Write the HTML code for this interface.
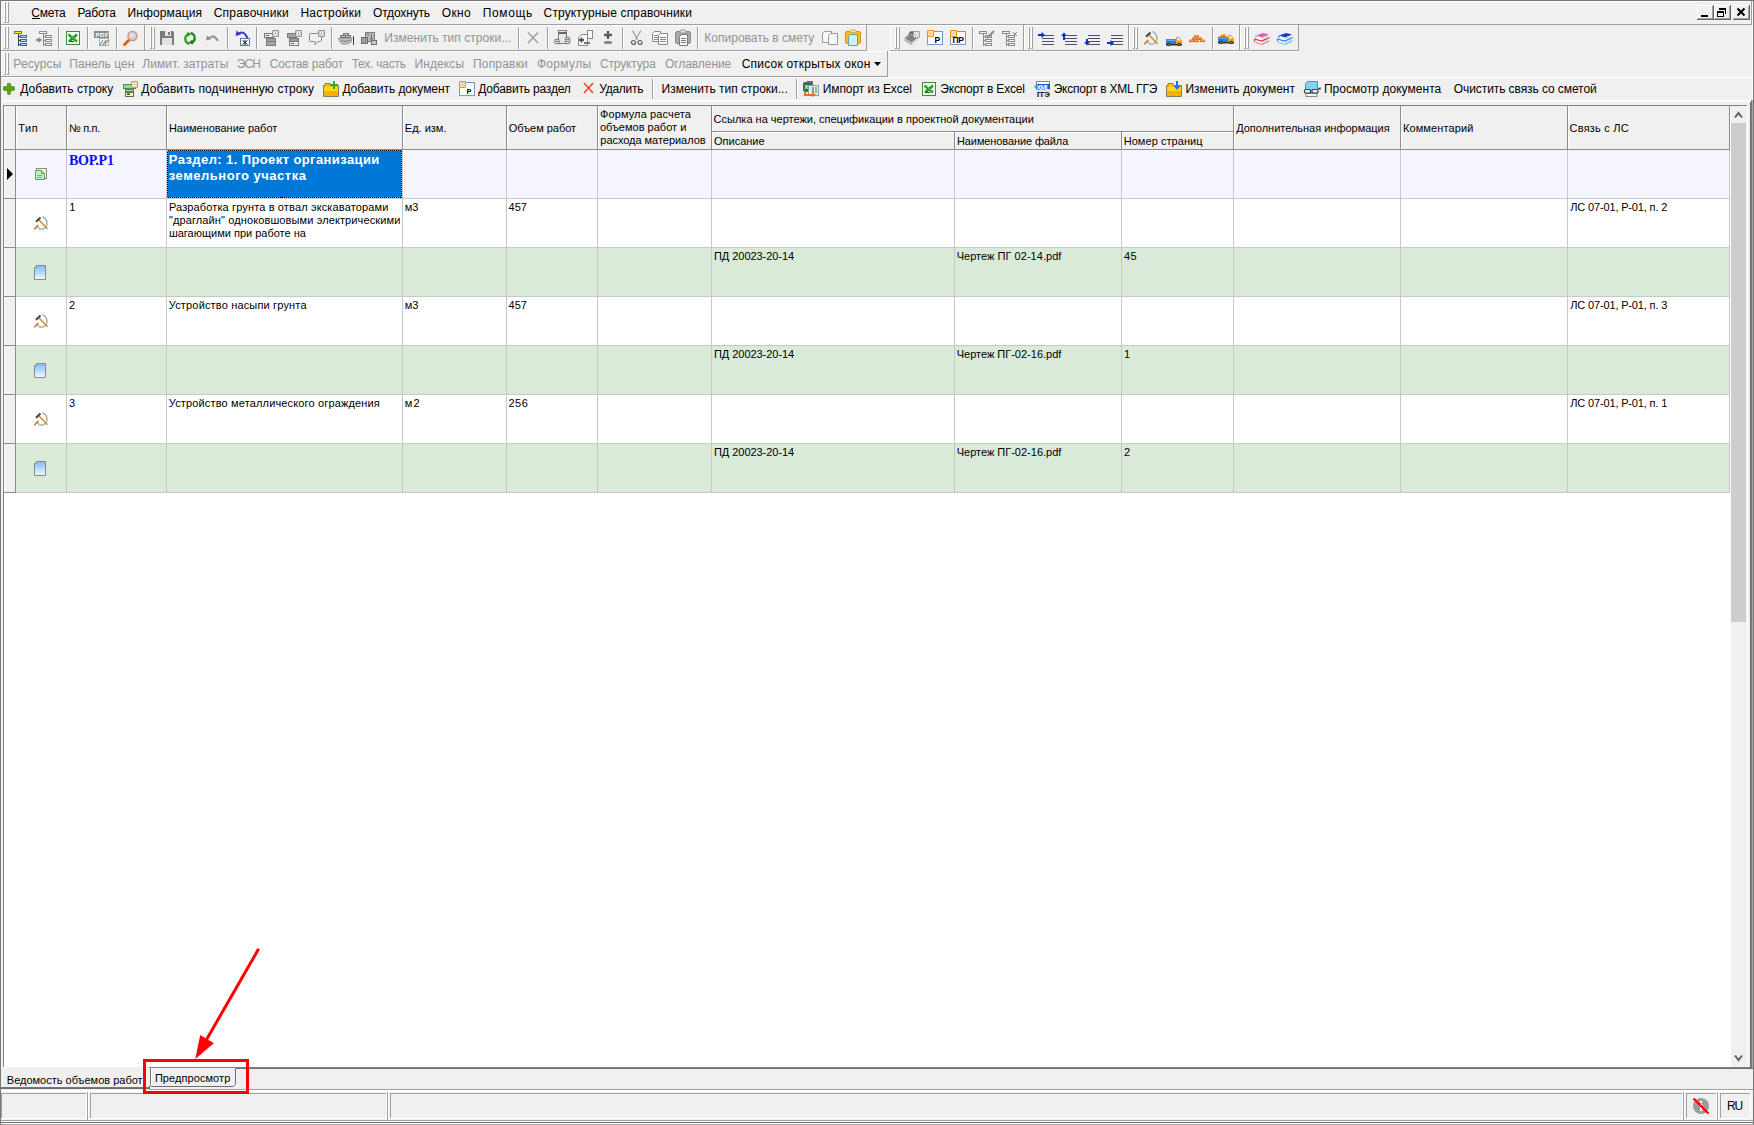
<!DOCTYPE html>
<html><head><meta charset="utf-8"><style>
html,body{margin:0;padding:0}
body{width:1754px;height:1125px;overflow:hidden;position:relative;background:#f0f0f0;font-family:"Liberation Sans",sans-serif}
body>div,body>span,body>svg{position:absolute;display:block}
body>span{white-space:pre}
</style></head><body>
<div style="left:0px;top:0px;width:1754px;height:1px;background:#787878;"></div>
<div style="left:0px;top:0px;width:1px;height:1125px;background:#787878;"></div>
<div style="left:1753px;top:0px;width:1px;height:1125px;background:#787878;"></div>
<div style="left:1px;top:1px;width:1752px;height:1px;background:#ffffff;"></div>
<div style="left:1px;top:24px;width:1752px;height:1px;background:#a0a0a0;"></div>
<div style="left:1px;top:1px;width:1px;height:23px;background:#ffffff;"></div>
<div style="left:4px;top:2px;width:1px;height:20px;background:#ffffff;"></div>
<div style="left:5px;top:2px;width:1px;height:21px;background:#a0a0a0;"></div>
<div style="left:4px;top:22px;width:1px;height:1px;background:#a0a0a0;"></div>
<div style="left:7px;top:2px;width:1px;height:20px;background:#ffffff;"></div>
<div style="left:8px;top:2px;width:1px;height:21px;background:#a0a0a0;"></div>
<div style="left:7px;top:22px;width:1px;height:1px;background:#a0a0a0;"></div>
<div style="left:32px;top:18px;width:8px;height:1px;background:#000;"></div>
<div style="left:1751px;top:1px;width:1px;height:24px;background:#a0a0a0;"></div>
<div style="left:1697px;top:5px;width:17px;height:15px;background:#f0f0f0;"></div>
<div style="left:1697px;top:5px;width:17px;height:1px;background:#ffffff;"></div>
<div style="left:1697px;top:5px;width:1px;height:15px;background:#ffffff;"></div>
<div style="left:1697px;top:19px;width:17px;height:1px;background:#696969;"></div>
<div style="left:1713px;top:5px;width:1px;height:15px;background:#696969;"></div>
<div style="left:1698px;top:18px;width:15px;height:1px;background:#a0a0a0;"></div>
<div style="left:1712px;top:6px;width:1px;height:13px;background:#a0a0a0;"></div>
<svg style="left:1697px;top:5px" width="17" height="15" viewBox="0 0 17 15"><rect x="4" y="10" width="7" height="2" fill="#000"/></svg>
<div style="left:1714px;top:5px;width:17px;height:15px;background:#f0f0f0;"></div>
<div style="left:1714px;top:5px;width:17px;height:1px;background:#ffffff;"></div>
<div style="left:1714px;top:5px;width:1px;height:15px;background:#ffffff;"></div>
<div style="left:1714px;top:19px;width:17px;height:1px;background:#696969;"></div>
<div style="left:1730px;top:5px;width:1px;height:15px;background:#696969;"></div>
<div style="left:1715px;top:18px;width:15px;height:1px;background:#a0a0a0;"></div>
<div style="left:1729px;top:6px;width:1px;height:13px;background:#a0a0a0;"></div>
<svg style="left:1714px;top:5px" width="17" height="15" viewBox="0 0 17 15"><g shape-rendering="crispEdges"><rect x="5" y="3" width="7" height="2" fill="#000"/><rect x="11" y="3" width="1" height="6" fill="#000"/><rect x="3" y="6" width="7" height="2" fill="#000"/><rect x="3" y="6" width="1" height="6" fill="#000"/><rect x="9" y="6" width="1" height="6" fill="#000"/><rect x="3" y="11" width="7" height="1" fill="#000"/></g></svg>
<div style="left:1733px;top:5px;width:17px;height:15px;background:#f0f0f0;"></div>
<div style="left:1733px;top:5px;width:17px;height:1px;background:#ffffff;"></div>
<div style="left:1733px;top:5px;width:1px;height:15px;background:#ffffff;"></div>
<div style="left:1733px;top:19px;width:17px;height:1px;background:#696969;"></div>
<div style="left:1749px;top:5px;width:1px;height:15px;background:#696969;"></div>
<div style="left:1734px;top:18px;width:15px;height:1px;background:#a0a0a0;"></div>
<div style="left:1748px;top:6px;width:1px;height:13px;background:#a0a0a0;"></div>
<svg style="left:1733px;top:5px" width="17" height="15" viewBox="0 0 17 15"><path d="M4.5 3.5L11.5 10.5M11.5 3.5L4.5 10.5" stroke="#000" stroke-width="2" fill="none"/></svg>
<div style="left:1px;top:25px;width:1752px;height:26px;background:#f0f0f0;"></div>
<div style="left:1px;top:25px;width:144px;height:1px;background:#ffffff;"></div>
<div style="left:1px;top:25px;width:1px;height:25px;background:#ffffff;"></div>
<div style="left:1px;top:50px;width:144px;height:1px;background:#a0a0a0;"></div>
<div style="left:144px;top:25px;width:1px;height:26px;background:#a0a0a0;"></div>
<div style="left:145px;top:25px;width:722px;height:1px;background:#ffffff;"></div>
<div style="left:145px;top:25px;width:1px;height:25px;background:#ffffff;"></div>
<div style="left:145px;top:50px;width:722px;height:1px;background:#a0a0a0;"></div>
<div style="left:866px;top:25px;width:1px;height:26px;background:#a0a0a0;"></div>
<div style="left:890px;top:25px;width:134px;height:1px;background:#ffffff;"></div>
<div style="left:890px;top:25px;width:1px;height:25px;background:#ffffff;"></div>
<div style="left:890px;top:50px;width:134px;height:1px;background:#a0a0a0;"></div>
<div style="left:1023px;top:25px;width:1px;height:26px;background:#a0a0a0;"></div>
<div style="left:1024px;top:25px;width:105px;height:1px;background:#ffffff;"></div>
<div style="left:1024px;top:25px;width:1px;height:25px;background:#ffffff;"></div>
<div style="left:1024px;top:50px;width:105px;height:1px;background:#a0a0a0;"></div>
<div style="left:1128px;top:25px;width:1px;height:26px;background:#a0a0a0;"></div>
<div style="left:1129px;top:25px;width:111px;height:1px;background:#ffffff;"></div>
<div style="left:1129px;top:25px;width:1px;height:25px;background:#ffffff;"></div>
<div style="left:1129px;top:50px;width:111px;height:1px;background:#a0a0a0;"></div>
<div style="left:1239px;top:25px;width:1px;height:26px;background:#a0a0a0;"></div>
<div style="left:1240px;top:25px;width:59px;height:1px;background:#ffffff;"></div>
<div style="left:1240px;top:25px;width:1px;height:25px;background:#ffffff;"></div>
<div style="left:1240px;top:50px;width:59px;height:1px;background:#a0a0a0;"></div>
<div style="left:1298px;top:25px;width:1px;height:26px;background:#a0a0a0;"></div>
<div style="left:867px;top:25px;width:23px;height:1px;background:#ffffff;"></div>
<div style="left:4px;top:27px;width:1px;height:21px;background:#ffffff;"></div>
<div style="left:5px;top:27px;width:1px;height:22px;background:#a0a0a0;"></div>
<div style="left:4px;top:48px;width:1px;height:1px;background:#a0a0a0;"></div>
<div style="left:7px;top:27px;width:1px;height:21px;background:#ffffff;"></div>
<div style="left:8px;top:27px;width:1px;height:22px;background:#a0a0a0;"></div>
<div style="left:7px;top:48px;width:1px;height:1px;background:#a0a0a0;"></div>
<div style="left:150px;top:27px;width:1px;height:21px;background:#ffffff;"></div>
<div style="left:151px;top:27px;width:1px;height:22px;background:#a0a0a0;"></div>
<div style="left:150px;top:48px;width:1px;height:1px;background:#a0a0a0;"></div>
<div style="left:153px;top:27px;width:1px;height:21px;background:#ffffff;"></div>
<div style="left:154px;top:27px;width:1px;height:22px;background:#a0a0a0;"></div>
<div style="left:153px;top:48px;width:1px;height:1px;background:#a0a0a0;"></div>
<div style="left:895px;top:27px;width:1px;height:21px;background:#ffffff;"></div>
<div style="left:896px;top:27px;width:1px;height:22px;background:#a0a0a0;"></div>
<div style="left:895px;top:48px;width:1px;height:1px;background:#a0a0a0;"></div>
<div style="left:898px;top:27px;width:1px;height:21px;background:#ffffff;"></div>
<div style="left:899px;top:27px;width:1px;height:22px;background:#a0a0a0;"></div>
<div style="left:898px;top:48px;width:1px;height:1px;background:#a0a0a0;"></div>
<div style="left:1028px;top:27px;width:1px;height:21px;background:#ffffff;"></div>
<div style="left:1029px;top:27px;width:1px;height:22px;background:#a0a0a0;"></div>
<div style="left:1028px;top:48px;width:1px;height:1px;background:#a0a0a0;"></div>
<div style="left:1031px;top:27px;width:1px;height:21px;background:#ffffff;"></div>
<div style="left:1032px;top:27px;width:1px;height:22px;background:#a0a0a0;"></div>
<div style="left:1031px;top:48px;width:1px;height:1px;background:#a0a0a0;"></div>
<div style="left:1133px;top:27px;width:1px;height:21px;background:#ffffff;"></div>
<div style="left:1134px;top:27px;width:1px;height:22px;background:#a0a0a0;"></div>
<div style="left:1133px;top:48px;width:1px;height:1px;background:#a0a0a0;"></div>
<div style="left:1136px;top:27px;width:1px;height:21px;background:#ffffff;"></div>
<div style="left:1137px;top:27px;width:1px;height:22px;background:#a0a0a0;"></div>
<div style="left:1136px;top:48px;width:1px;height:1px;background:#a0a0a0;"></div>
<div style="left:1244px;top:27px;width:1px;height:21px;background:#ffffff;"></div>
<div style="left:1245px;top:27px;width:1px;height:22px;background:#a0a0a0;"></div>
<div style="left:1244px;top:48px;width:1px;height:1px;background:#a0a0a0;"></div>
<div style="left:1247px;top:27px;width:1px;height:21px;background:#ffffff;"></div>
<div style="left:1248px;top:27px;width:1px;height:22px;background:#a0a0a0;"></div>
<div style="left:1247px;top:48px;width:1px;height:1px;background:#a0a0a0;"></div>
<div style="left:58px;top:27px;width:1px;height:22px;background:#a0a0a0;"></div>
<div style="left:59px;top:27px;width:1px;height:22px;background:#ffffff;"></div>
<div style="left:87px;top:27px;width:1px;height:22px;background:#a0a0a0;"></div>
<div style="left:88px;top:27px;width:1px;height:22px;background:#ffffff;"></div>
<div style="left:116px;top:27px;width:1px;height:22px;background:#a0a0a0;"></div>
<div style="left:117px;top:27px;width:1px;height:22px;background:#ffffff;"></div>
<div style="left:227px;top:27px;width:1px;height:22px;background:#a0a0a0;"></div>
<div style="left:228px;top:27px;width:1px;height:22px;background:#ffffff;"></div>
<div style="left:256px;top:27px;width:1px;height:22px;background:#a0a0a0;"></div>
<div style="left:257px;top:27px;width:1px;height:22px;background:#ffffff;"></div>
<div style="left:331px;top:27px;width:1px;height:22px;background:#a0a0a0;"></div>
<div style="left:332px;top:27px;width:1px;height:22px;background:#ffffff;"></div>
<div style="left:518px;top:27px;width:1px;height:22px;background:#a0a0a0;"></div>
<div style="left:519px;top:27px;width:1px;height:22px;background:#ffffff;"></div>
<div style="left:547px;top:27px;width:1px;height:22px;background:#a0a0a0;"></div>
<div style="left:548px;top:27px;width:1px;height:22px;background:#ffffff;"></div>
<div style="left:622px;top:27px;width:1px;height:22px;background:#a0a0a0;"></div>
<div style="left:623px;top:27px;width:1px;height:22px;background:#ffffff;"></div>
<div style="left:697px;top:27px;width:1px;height:22px;background:#a0a0a0;"></div>
<div style="left:698px;top:27px;width:1px;height:22px;background:#ffffff;"></div>
<div style="left:972px;top:27px;width:1px;height:22px;background:#a0a0a0;"></div>
<div style="left:973px;top:27px;width:1px;height:22px;background:#ffffff;"></div>
<div style="left:1212px;top:27px;width:1px;height:22px;background:#a0a0a0;"></div>
<div style="left:1213px;top:27px;width:1px;height:22px;background:#ffffff;"></div>
<div style="left:1px;top:51px;width:1298px;height:1px;background:#ffffff;"></div>
<div style="left:1px;top:51px;width:887px;height:1px;background:#ffffff;"></div>
<div style="left:1px;top:51px;width:1px;height:25px;background:#ffffff;"></div>
<div style="left:1px;top:76px;width:887px;height:1px;background:#a0a0a0;"></div>
<div style="left:887px;top:51px;width:1px;height:26px;background:#a0a0a0;"></div>
<div style="left:4px;top:53px;width:1px;height:21px;background:#ffffff;"></div>
<div style="left:5px;top:53px;width:1px;height:22px;background:#a0a0a0;"></div>
<div style="left:4px;top:74px;width:1px;height:1px;background:#a0a0a0;"></div>
<div style="left:7px;top:53px;width:1px;height:21px;background:#ffffff;"></div>
<div style="left:8px;top:53px;width:1px;height:22px;background:#a0a0a0;"></div>
<div style="left:7px;top:74px;width:1px;height:1px;background:#a0a0a0;"></div>
<svg style="left:874px;top:62px" width="7" height="4" viewBox="0 0 7 4"><path d="M0 0h7L3.5 4z" fill="#000"/></svg>
<div style="left:1px;top:77px;width:1752px;height:1px;background:#ffffff;"></div>
<div style="left:652px;top:79px;width:1px;height:20px;background:#a0a0a0;"></div>
<div style="left:653px;top:79px;width:1px;height:20px;background:#ffffff;"></div>
<div style="left:796px;top:79px;width:1px;height:20px;background:#a0a0a0;"></div>
<div style="left:797px;top:79px;width:1px;height:20px;background:#ffffff;"></div>
<div style="left:1px;top:100px;width:1752px;height:1px;background:#ffffff;"></div>
<div style="left:1px;top:101px;width:1752px;height:1px;background:#f7f7f7;"></div>
<div style="left:3px;top:105px;width:1745px;height:962px;background:#ffffff;"></div>
<div style="left:3px;top:105px;width:1px;height:962px;background:#828282;"></div>
<div style="left:3px;top:105px;width:1727px;height:1px;background:#828282;"></div>
<div style="left:4px;top:106px;width:1725px;height:43px;background:#f0f0f0;"></div>
<div style="left:4px;top:106px;width:1px;height:43px;background:#ffffff;"></div>
<div style="left:16px;top:106px;width:1px;height:43px;background:#ffffff;"></div>
<div style="left:67px;top:106px;width:1px;height:43px;background:#ffffff;"></div>
<div style="left:167px;top:106px;width:1px;height:43px;background:#ffffff;"></div>
<div style="left:403px;top:106px;width:1px;height:43px;background:#ffffff;"></div>
<div style="left:507px;top:106px;width:1px;height:43px;background:#ffffff;"></div>
<div style="left:598px;top:106px;width:1px;height:43px;background:#ffffff;"></div>
<div style="left:712px;top:106px;width:1px;height:43px;background:#ffffff;"></div>
<div style="left:955px;top:133px;width:1px;height:16px;background:#ffffff;"></div>
<div style="left:1122px;top:133px;width:1px;height:16px;background:#ffffff;"></div>
<div style="left:1234px;top:106px;width:1px;height:43px;background:#ffffff;"></div>
<div style="left:1401px;top:106px;width:1px;height:43px;background:#ffffff;"></div>
<div style="left:1568px;top:106px;width:1px;height:43px;background:#ffffff;"></div>
<div style="left:4px;top:149px;width:1726px;height:1px;background:#8c8c8c;"></div>
<div style="left:712px;top:131px;width:521px;height:1px;background:#8c8c8c;"></div>
<div style="left:712px;top:132px;width:521px;height:1px;background:#ffffff;"></div>
<div style="left:15px;top:106px;width:1px;height:43px;background:#8c8c8c;"></div>
<div style="left:66px;top:106px;width:1px;height:43px;background:#8c8c8c;"></div>
<div style="left:166px;top:106px;width:1px;height:43px;background:#8c8c8c;"></div>
<div style="left:402px;top:106px;width:1px;height:43px;background:#8c8c8c;"></div>
<div style="left:506px;top:106px;width:1px;height:43px;background:#8c8c8c;"></div>
<div style="left:597px;top:106px;width:1px;height:43px;background:#8c8c8c;"></div>
<div style="left:711px;top:106px;width:1px;height:43px;background:#8c8c8c;"></div>
<div style="left:954px;top:132px;width:1px;height:17px;background:#8c8c8c;"></div>
<div style="left:1121px;top:132px;width:1px;height:17px;background:#8c8c8c;"></div>
<div style="left:1233px;top:106px;width:1px;height:43px;background:#8c8c8c;"></div>
<div style="left:1400px;top:106px;width:1px;height:43px;background:#8c8c8c;"></div>
<div style="left:1567px;top:106px;width:1px;height:43px;background:#8c8c8c;"></div>
<div style="left:1729px;top:106px;width:1px;height:43px;background:#8c8c8c;"></div>
<div style="left:16px;top:150px;width:1713px;height:48px;background:#f5f5fd;"></div>
<div style="left:4px;top:150px;width:11px;height:48px;background:#f0f0f0;"></div>
<div style="left:4px;top:150px;width:1px;height:48px;background:#ffffff;"></div>
<div style="left:4px;top:198px;width:12px;height:1px;background:#8c8c8c;"></div>
<div style="left:16px;top:198px;width:1714px;height:1px;background:#c8c8c8;"></div>
<div style="left:16px;top:199px;width:1713px;height:48px;background:#ffffff;"></div>
<div style="left:4px;top:199px;width:11px;height:48px;background:#f0f0f0;"></div>
<div style="left:4px;top:199px;width:1px;height:48px;background:#ffffff;"></div>
<div style="left:4px;top:247px;width:12px;height:1px;background:#8c8c8c;"></div>
<div style="left:16px;top:247px;width:1714px;height:1px;background:#c8c8c8;"></div>
<div style="left:16px;top:248px;width:1713px;height:48px;background:#daead9;"></div>
<div style="left:4px;top:248px;width:11px;height:48px;background:#f0f0f0;"></div>
<div style="left:4px;top:248px;width:1px;height:48px;background:#ffffff;"></div>
<div style="left:4px;top:296px;width:12px;height:1px;background:#8c8c8c;"></div>
<div style="left:16px;top:296px;width:1714px;height:1px;background:#c8c8c8;"></div>
<div style="left:16px;top:297px;width:1713px;height:48px;background:#ffffff;"></div>
<div style="left:4px;top:297px;width:11px;height:48px;background:#f0f0f0;"></div>
<div style="left:4px;top:297px;width:1px;height:48px;background:#ffffff;"></div>
<div style="left:4px;top:345px;width:12px;height:1px;background:#8c8c8c;"></div>
<div style="left:16px;top:345px;width:1714px;height:1px;background:#c8c8c8;"></div>
<div style="left:16px;top:346px;width:1713px;height:48px;background:#daead9;"></div>
<div style="left:4px;top:346px;width:11px;height:48px;background:#f0f0f0;"></div>
<div style="left:4px;top:346px;width:1px;height:48px;background:#ffffff;"></div>
<div style="left:4px;top:394px;width:12px;height:1px;background:#8c8c8c;"></div>
<div style="left:16px;top:394px;width:1714px;height:1px;background:#c8c8c8;"></div>
<div style="left:16px;top:395px;width:1713px;height:48px;background:#ffffff;"></div>
<div style="left:4px;top:395px;width:11px;height:48px;background:#f0f0f0;"></div>
<div style="left:4px;top:395px;width:1px;height:48px;background:#ffffff;"></div>
<div style="left:4px;top:443px;width:12px;height:1px;background:#8c8c8c;"></div>
<div style="left:16px;top:443px;width:1714px;height:1px;background:#c8c8c8;"></div>
<div style="left:16px;top:444px;width:1713px;height:48px;background:#daead9;"></div>
<div style="left:4px;top:444px;width:11px;height:48px;background:#f0f0f0;"></div>
<div style="left:4px;top:444px;width:1px;height:48px;background:#ffffff;"></div>
<div style="left:4px;top:492px;width:12px;height:1px;background:#8c8c8c;"></div>
<div style="left:16px;top:492px;width:1714px;height:1px;background:#c8c8c8;"></div>
<div style="left:15px;top:150px;width:1px;height:343px;background:#8c8c8c;"></div>
<div style="left:66px;top:150px;width:1px;height:343px;background:#c8c8c8;"></div>
<div style="left:166px;top:150px;width:1px;height:343px;background:#c8c8c8;"></div>
<div style="left:402px;top:150px;width:1px;height:343px;background:#c8c8c8;"></div>
<div style="left:506px;top:150px;width:1px;height:343px;background:#c8c8c8;"></div>
<div style="left:597px;top:150px;width:1px;height:343px;background:#c8c8c8;"></div>
<div style="left:711px;top:150px;width:1px;height:343px;background:#c8c8c8;"></div>
<div style="left:954px;top:150px;width:1px;height:343px;background:#c8c8c8;"></div>
<div style="left:1121px;top:150px;width:1px;height:343px;background:#c8c8c8;"></div>
<div style="left:1233px;top:150px;width:1px;height:343px;background:#c8c8c8;"></div>
<div style="left:1400px;top:150px;width:1px;height:343px;background:#c8c8c8;"></div>
<div style="left:1567px;top:150px;width:1px;height:343px;background:#c8c8c8;"></div>
<div style="left:1729px;top:150px;width:1px;height:343px;background:#c8c8c8;"></div>
<div style="left:167px;top:150px;width:235px;height:48px;background:#0078d7;"></div>
<svg style="left:167px;top:150px" width="235" height="48" viewBox="0 0 235 48" shape-rendering="crispEdges"><rect x="0.5" y="0.5" width="234" height="47" fill="none" stroke="#f08a20"/><rect x="0.5" y="0.5" width="234" height="47" fill="none" stroke="#000" stroke-dasharray="1 1"/></svg>
<svg style="left:7px;top:168px" width="7" height="12" viewBox="0 0 7 12"><path d="M0 0L6 6L0 12z" fill="#000"/></svg>
<div style="left:1731px;top:106px;width:16px;height:961px;background:#f0f0f0;"></div>
<div style="left:1747px;top:105px;width:1px;height:962px;background:#ffffff;"></div>
<div style="left:1731px;top:123px;width:15px;height:499px;background:#cdcdcd;"></div>
<svg style="left:1733px;top:110px" width="11" height="10" viewBox="0 0 11 10"><path d="M2 7.5L5.5 3L9 7.5" stroke="#606060" stroke-width="2" fill="none"/></svg>
<svg style="left:1733px;top:1053px" width="11" height="10" viewBox="0 0 11 10"><path d="M2 2.5L5.5 7L9 2.5" stroke="#606060" stroke-width="2" fill="none"/></svg>
<div style="left:1748px;top:102px;width:1px;height:966px;background:#f0f0f0;"></div>
<div style="left:1749px;top:102px;width:1px;height:966px;background:#f0f0f0;"></div>
<div style="left:1750px;top:102px;width:1px;height:966px;background:#6e6e6e;"></div>
<div style="left:1751px;top:100px;width:1px;height:1025px;background:#7a7a7a;"></div>
<div style="left:1752px;top:1px;width:1px;height:99px;background:#ffffff;"></div>
<div style="left:1752px;top:100px;width:1px;height:1025px;background:#a8a8a8;"></div>
<div style="left:1730px;top:105px;width:17px;height:1px;background:#828282;"></div>
<div style="left:149px;top:1067px;width:1602px;height:1px;background:#828282;"></div>
<div style="left:1px;top:1068px;width:1752px;height:21px;background:#f0f0f0;"></div>
<div style="left:236px;top:1068px;width:1517px;height:1px;background:#6e6e6e;"></div>
<div style="left:1px;top:1087px;width:149px;height:1px;background:#777777;"></div>
<div style="left:1px;top:1088px;width:149px;height:1px;background:#6a6a6a;"></div>
<div style="left:149px;top:1089px;width:1604px;height:1px;background:#a0a0a0;"></div>
<svg style="left:148px;top:1068px" width="90" height="21" viewBox="0 0 90 21"><path d="M2.5 0.5V16.5L0.5 19.5" stroke="#6e6e6e" fill="none"/><path d="M2.5 18.5H85.5L87.5 16.5V0.5" stroke="#6e6e6e" fill="none"/><path d="M3.5 1V17" stroke="#fff"/></svg>
<div style="left:1px;top:1090px;width:1752px;height:35px;background:#f0f0f0;"></div>
<div style="left:1px;top:1090px;width:1752px;height:1px;background:#ffffff;"></div>
<div style="left:1px;top:1091px;width:1752px;height:1px;background:#ffffff;"></div>
<div style="left:1px;top:1093px;width:85px;height:1px;background:#a0a0a0;"></div>
<div style="left:1px;top:1093px;width:1px;height:25px;background:#a0a0a0;"></div>
<div style="left:1px;top:1118px;width:86px;height:1px;background:#ffffff;"></div>
<div style="left:86px;top:1093px;width:1px;height:26px;background:#ffffff;"></div>
<div style="left:87px;top:1092px;width:1px;height:28px;background:#a0a0a0;"></div>
<div style="left:88px;top:1092px;width:1px;height:28px;background:#ffffff;"></div>
<div style="left:86px;top:1092px;width:1px;height:28px;background:#ffffff;"></div>
<div style="left:90px;top:1093px;width:296px;height:1px;background:#a0a0a0;"></div>
<div style="left:90px;top:1093px;width:1px;height:25px;background:#a0a0a0;"></div>
<div style="left:90px;top:1118px;width:297px;height:1px;background:#ffffff;"></div>
<div style="left:386px;top:1093px;width:1px;height:26px;background:#ffffff;"></div>
<div style="left:387px;top:1092px;width:1px;height:28px;background:#a0a0a0;"></div>
<div style="left:388px;top:1092px;width:1px;height:28px;background:#ffffff;"></div>
<div style="left:386px;top:1092px;width:1px;height:28px;background:#ffffff;"></div>
<div style="left:390px;top:1093px;width:1292px;height:1px;background:#a0a0a0;"></div>
<div style="left:390px;top:1093px;width:1px;height:25px;background:#a0a0a0;"></div>
<div style="left:390px;top:1118px;width:1293px;height:1px;background:#ffffff;"></div>
<div style="left:1682px;top:1093px;width:1px;height:26px;background:#ffffff;"></div>
<div style="left:1683px;top:1092px;width:1px;height:28px;background:#a0a0a0;"></div>
<div style="left:1684px;top:1092px;width:1px;height:28px;background:#ffffff;"></div>
<div style="left:1682px;top:1092px;width:1px;height:28px;background:#ffffff;"></div>
<div style="left:1686px;top:1093px;width:30px;height:1px;background:#a0a0a0;"></div>
<div style="left:1686px;top:1093px;width:1px;height:25px;background:#a0a0a0;"></div>
<div style="left:1686px;top:1118px;width:31px;height:1px;background:#ffffff;"></div>
<div style="left:1716px;top:1093px;width:1px;height:26px;background:#ffffff;"></div>
<div style="left:1717px;top:1092px;width:1px;height:28px;background:#a0a0a0;"></div>
<div style="left:1718px;top:1092px;width:1px;height:28px;background:#ffffff;"></div>
<div style="left:1716px;top:1092px;width:1px;height:28px;background:#ffffff;"></div>
<div style="left:1720px;top:1093px;width:30px;height:1px;background:#a0a0a0;"></div>
<div style="left:1720px;top:1093px;width:1px;height:25px;background:#a0a0a0;"></div>
<div style="left:1720px;top:1118px;width:31px;height:1px;background:#ffffff;"></div>
<div style="left:1750px;top:1093px;width:1px;height:26px;background:#ffffff;"></div>
<div style="left:1px;top:1120px;width:1752px;height:1px;background:#a0a0a0;"></div>
<div style="left:1px;top:1121px;width:1752px;height:1px;background:#ffffff;"></div>
<div style="left:1px;top:1122px;width:1752px;height:1px;background:#6e6e6e;"></div>
<div style="left:1px;top:1123px;width:1752px;height:1px;background:#ffffff;"></div>
<div style="left:0px;top:1124px;width:1754px;height:1px;background:#a0a0a0;"></div>
<svg style="left:1692px;top:1097px" width="18" height="18" viewBox="0 0 18 18"><circle cx="9" cy="9" r="8" fill="#9c9c9c"/><rect x="8" y="4" width="2.2" height="2" fill="#fff"/><rect x="8" y="7" width="2.2" height="7" fill="#fff"/><path d="M1.5 1.5L16.5 16.5" stroke="#ff0000" stroke-width="2.2"/></svg>
<svg style="left:0;top:0" width="1754" height="1125" viewBox="0 0 1754 1125"><g transform="translate(13 30)"><rect x="1" y="1" width="8" height="3" fill="#7a7a30"/><rect x="2" y="2" width="6" height="1" fill="#ffff00"/><rect x="5" y="4" width="1" height="12" fill="#2a3a60"/><rect x="5" y="6" width="2" height="1" fill="#2a3a60"/><rect x="5" y="10" width="2" height="1" fill="#2a3a60"/><rect x="5" y="14" width="2" height="1" fill="#2a3a60"/><rect x="7" y="5" width="7" height="3" fill="#4a5f8a"/><rect x="8" y="6" width="5" height="1" fill="#b4dcff"/><rect x="7" y="9" width="7" height="3" fill="#4a5f8a"/><rect x="8" y="10" width="5" height="1" fill="#b4dcff"/><rect x="7" y="13" width="7" height="3" fill="#4a5f8a"/><rect x="8" y="14" width="5" height="1" fill="#b4dcff"/></g><g transform="translate(36 30)"><rect x="3" y="1" width="8" height="3" fill="#8a8a8a"/><rect x="4" y="2" width="6" height="1" fill="#f4f4f4"/><rect x="7" y="4" width="1" height="12" fill="#8a8a8a"/><rect x="7" y="6" width="2" height="1" fill="#8a8a8a"/><rect x="7" y="10" width="2" height="1" fill="#8a8a8a"/><rect x="7" y="14" width="2" height="1" fill="#8a8a8a"/><rect x="9" y="5" width="7" height="3" fill="#8a8a8a"/><rect x="10" y="6" width="5" height="1" fill="#f4f4f4"/><rect x="9" y="9" width="7" height="3" fill="#8a8a8a"/><rect x="10" y="10" width="5" height="1" fill="#f4f4f4"/><rect x="9" y="13" width="7" height="3" fill="#8a8a8a"/><rect x="10" y="14" width="5" height="1" fill="#f4f4f4"/><rect x="0" y="9" width="3" height="2" fill="#858585"/><path d="M2.5 7L6 10L2.5 13z" fill="#858585"/></g><g transform="translate(66 31)"><rect x="0" y="0" width="14" height="14" fill="#3f8a3f"/><rect x="1" y="1" width="12" height="12" fill="#ffffff"/><rect x="1" y="1" width="12" height="12" fill="#f4fbf4"/><path d="M2.5 3.5L11 10.5M11 3.5L3 10.5" stroke="#22992c" stroke-width="2.6"/><path d="M3.5 3.2L10.5 9.5" stroke="#8fd88f" stroke-width="0.7"/><path d="M3 10.5H8" stroke="#106a18" stroke-width="1"/></g><g transform="translate(94 30)"><rect x="0" y="1" width="15" height="7" fill="#8c8c8c"/><text x="1.5" y="7" font-family="Liberation Sans" font-weight="bold" font-size="6.2" fill="#fff" letter-spacing="0.4">PDF</text><rect x="5" y="8" width="10" height="8" fill="#b0b0b0"/><rect x="6" y="9" width="8" height="6" fill="#f8f8f8"/><path d="M5.5 15.5L9 10M8.5 15.5L12 10M11 15.5Q12 11 15 10" stroke="#8a8a8a" stroke-width="1.2" fill="none"/></g><g transform="translate(123 30)"><path d="M1.5 14.5L6 10" stroke="#e0640c" stroke-width="3" stroke-linecap="round"/><circle cx="9.5" cy="6" r="4.6" fill="#b8cdf2" stroke="#e88a50" stroke-width="1.3"/><circle cx="9" cy="5.5" r="2.2" fill="#d8e4fb"/></g><g transform="translate(160 31)"><path d="M0 0H13L14 1V14H0z" fill="#7c7c7c"/><rect x="5" y="0" width="6" height="5" fill="#e8e8e8"/><rect x="8" y="1" width="2" height="3" fill="#7c7c7c"/><rect x="2" y="7" width="10" height="7" fill="#e2e2e2"/></g><g transform="translate(183 32)"><path d="M5.5 2.2A5 5 0 0 0 6.5 11.8" stroke="#2aa01e" stroke-width="2.3" fill="none"/><path d="M8.5 10.8A5 5 0 0 0 7.5 1.2" stroke="#1e8a18" stroke-width="2.3" fill="none"/><path d="M4 0L8.5 1.8L4.5 5z" fill="#2aa01e"/><path d="M10 12.5L5.5 10.8L9.5 7.5z" fill="#107a10"/></g><g transform="translate(206 33)"><path d="M3 6Q7 0 12 8" stroke="#8e8e8e" stroke-width="1.8" fill="none"/><path d="M0 7.5L1 2.5L5.5 6z" fill="#8e8e8e"/></g><g transform="translate(235 30)"><path d="M3 4.5Q8 -1 12.5 8" stroke="#3434e0" stroke-width="2" fill="none"/><path d="M0.5 6L1.5 0.5L6 4.5z" fill="#3434e0"/><rect x="5" y="8" width="10" height="8" fill="#5a74b0"/><rect x="6" y="9" width="8" height="6" fill="#ffffff"/><path d="M7.5 10.5L12.5 14.5M12.5 10.5L7.5 14.5M10 10V15" stroke="#202020" stroke-width="1"/></g><g transform="translate(264 30)"><rect x="0" y="3" width="10" height="5" fill="#7a7a7a"/><rect x="1" y="4" width="8" height="3" fill="#e8e8e8"/><rect x="2" y="5" width="3" height="1" fill="#606060"/><rect x="2" y="8" width="10" height="8" fill="#7a7a7a"/><rect x="3" y="9" width="8" height="2" fill="#a4a4a4"/><rect x="3" y="12" width="8" height="3" fill="#a4a4a4"/><rect x="8" y="0" width="7" height="7" rx="1.2" fill="#8a8a8a"/><path d="M11.5 0.6000000000000001L14.4 3.5L11.5 6.4L8.6 3.5z" fill="#fff"/><circle cx="11.5" cy="3.5" r="0.9" fill="#8a8a8a"/><circle cx="9.3" cy="1.3" r="0.6" fill="#fff"/><circle cx="13.7" cy="1.3" r="0.6" fill="#fff"/><circle cx="9.3" cy="5.7" r="0.6" fill="#fff"/><circle cx="13.7" cy="5.7" r="0.6" fill="#fff"/></g><g transform="translate(287 30)"><rect x="0" y="3" width="10" height="5" fill="#7a7a7a"/><rect x="1" y="4" width="8" height="3" fill="#a4a4a4"/><rect x="2" y="8" width="10" height="8" fill="#7a7a7a"/><rect x="3" y="9" width="8" height="2" fill="#9a9a9a"/><rect x="3" y="12" width="8" height="3" fill="#ececec"/><rect x="4" y="13" width="3" height="1" fill="#606060"/><rect x="8" y="0" width="7" height="7" rx="1.2" fill="#8a8a8a"/><path d="M11.5 0.6000000000000001L14.4 3.5L11.5 6.4L8.6 3.5z" fill="#fff"/><circle cx="11.5" cy="3.5" r="0.9" fill="#8a8a8a"/><circle cx="9.3" cy="1.3" r="0.6" fill="#fff"/><circle cx="13.7" cy="1.3" r="0.6" fill="#fff"/><circle cx="9.3" cy="5.7" r="0.6" fill="#fff"/><circle cx="13.7" cy="5.7" r="0.6" fill="#fff"/></g><g transform="translate(309 30)"><path d="M1.5 3.5H11.5Q12.5 3.5 12.5 4.5V10.5Q12.5 11.5 11.5 11.5H9L6 15V11.5H1.5Q0.5 11.5 0.5 10.5V4.5Q0.5 3.5 1.5 3.5z" fill="#f0f0f0" stroke="#8a8a8a"/><rect x="9" y="0" width="7" height="7" rx="1.2" fill="#8a8a8a"/><path d="M12.5 0.6000000000000001L15.4 3.5L12.5 6.4L9.6 3.5z" fill="#fff"/><circle cx="12.5" cy="3.5" r="0.9" fill="#8a8a8a"/><circle cx="10.3" cy="1.3" r="0.6" fill="#fff"/><circle cx="14.7" cy="1.3" r="0.6" fill="#fff"/><circle cx="10.3" cy="5.7" r="0.6" fill="#fff"/><circle cx="14.7" cy="5.7" r="0.6" fill="#fff"/></g><g transform="translate(338 32)"><path d="M0.5 6.5L14 6L13 10Q9 13 4 12Q1.5 10 0.5 6.5z" fill="#c4c4c4" stroke="#8a8a8a" stroke-width="0.9"/><path d="M3 8.5Q8 10.5 12 8" stroke="#7a7a7a" stroke-width="1.2" fill="none"/><rect x="5" y="1" width="6" height="3" fill="#7a7a7a"/><rect x="6" y="2" width="4" height="1" fill="#b8b8b8"/><rect x="2" y="3" width="6" height="3" fill="#7a7a7a"/><rect x="3" y="4" width="4" height="1" fill="#b8b8b8"/><rect x="7" y="3" width="6" height="3" fill="#7a7a7a"/><rect x="8" y="4" width="4" height="1" fill="#b8b8b8"/><rect x="15" y="4" width="1" height="9" fill="#404040"/></g><g transform="translate(361 32)"><rect x="4" y="0" width="10" height="10" fill="#7a7a7a"/><rect x="5" y="1" width="8" height="8" fill="#b8b8b8"/><path d="M6 2.5H8M10.5 2.5V7M9 7H12" stroke="#6a6a6a"/><rect x="0" y="5" width="7" height="7" fill="#6e6e6e"/><rect x="1" y="6" width="5" height="5" fill="#a8a8a8"/><rect x="2" y="6" width="1" height="5" fill="#8a8a8a"/><rect x="4" y="6" width="1" height="5" fill="#8a8a8a"/><rect x="10" y="8" width="6" height="5" fill="#6e6e6e"/><rect x="11" y="9" width="4" height="3" fill="#c8c8c8"/></g><g transform="translate(527 32)"><path d="M1 0.5L11 11M11 0.5L1 11" stroke="#9c9c9c" stroke-width="1.4"/></g><g transform="translate(554 30)"><rect x="4" y="0" width="9" height="14" fill="#7a7a7a"/><rect x="5" y="1" width="7" height="12" fill="#e6e6e6"/><rect x="5" y="2" width="7" height="2" fill="#6a6a6a"/><rect x="5" y="6" width="1" height="1" fill="#fff"/><rect x="5" y="8" width="1" height="1" fill="#fff"/><rect x="5" y="10" width="1" height="1" fill="#fff"/><rect x="5" y="12" width="1" height="1" fill="#fff"/><rect x="7" y="6" width="1" height="1" fill="#fff"/><rect x="7" y="8" width="1" height="1" fill="#fff"/><rect x="7" y="10" width="1" height="1" fill="#fff"/><rect x="7" y="12" width="1" height="1" fill="#fff"/><rect x="9" y="6" width="1" height="1" fill="#fff"/><rect x="9" y="8" width="1" height="1" fill="#fff"/><rect x="9" y="10" width="1" height="1" fill="#fff"/><rect x="9" y="12" width="1" height="1" fill="#fff"/><rect x="11" y="6" width="1" height="1" fill="#fff"/><rect x="11" y="8" width="1" height="1" fill="#fff"/><rect x="11" y="10" width="1" height="1" fill="#fff"/><rect x="11" y="12" width="1" height="1" fill="#fff"/><ellipse cx="3" cy="10.5" rx="2.6" ry="1.3" fill="#e8e8e8" stroke="#6e6e6e"/><ellipse cx="3" cy="12.5" rx="2.6" ry="1.3" fill="#e8e8e8" stroke="#6e6e6e"/><ellipse cx="13.5" cy="8.5" rx="2.6" ry="1.3" fill="#e8e8e8" stroke="#6e6e6e"/><ellipse cx="13.5" cy="10.5" rx="2.6" ry="1.3" fill="#e8e8e8" stroke="#6e6e6e"/><ellipse cx="13.5" cy="12.5" rx="2.6" ry="1.3" fill="#e8e8e8" stroke="#6e6e6e"/></g><g transform="translate(578 30)"><path d="M3.5 4.5H9.5V15.5H0.5V7.5z" fill="#fafafa" stroke="#8a8a8a"/><rect x="9" y="0" width="6" height="9" fill="#8a8a8a"/><rect x="10" y="1" width="4" height="7" fill="#f8f8f8"/><rect x="1" y="9" width="5" height="2" fill="#555"/><rect x="2.5" y="7.5" width="2" height="5" fill="#555"/><rect x="6" y="12" width="6" height="2" fill="#777"/></g><g transform="translate(604 31)"><path d="M2.8 0H5.2V2.8H8V5.2H5.2V8H2.8V5.2H0V2.8H2.8z" fill="#5a5a5a"/><rect x="0" y="10" width="8" height="3" rx="1.2" fill="#8a8a8a"/></g><g transform="translate(631 30)"><path d="M1.5 0.5L6.5 9.5M10 0.5L4.5 9.5" stroke="#a0a0a0" stroke-width="1.3" fill="none"/><circle cx="2.5" cy="12.5" r="2" fill="none" stroke="#5a5a5a" stroke-width="1.2"/><circle cx="9" cy="12.5" r="2" fill="none" stroke="#5a5a5a" stroke-width="1.2"/></g><g transform="translate(652 31)"><path d="M2.5 0.5H8.5V10.5H0.5V2.5z" fill="#fafafa" stroke="#8a8a8a"/><rect x="2" y="4" width="5" height="1" fill="#8a8a8a"/><rect x="2" y="6" width="5" height="1" fill="#8a8a8a"/><rect x="2" y="8" width="5" height="1" fill="#8a8a8a"/><path d="M8.5 2.5H15.5V13.5H6.5V4.5z" fill="#fafafa" stroke="#8a8a8a"/><rect x="8" y="6" width="6" height="1" fill="#8a8a8a"/><rect x="8" y="8" width="6" height="1" fill="#8a8a8a"/><rect x="8" y="10" width="6" height="1" fill="#8a8a8a"/></g><g transform="translate(675 30)"><rect x="0.5" y="1.5" width="15" height="12" rx="1.5" fill="#a8a8a8" stroke="#8a8a8a"/><rect x="5" y="0" width="6" height="3" rx="1" fill="#e0e0e0" stroke="#8a8a8a" stroke-width="0.8"/><path d="M6.5 4.5H12.5V15.5H4.5V6.5z" fill="#fafafa" stroke="#7a7a7a"/><rect x="6" y="8" width="5" height="1" fill="#7a7a7a"/><rect x="6" y="10" width="5" height="1" fill="#7a7a7a"/><rect x="6" y="12" width="5" height="1" fill="#7a7a7a"/></g><g transform="translate(822 31)"><path d="M2.5 0.5H9.5V11.5H0.5V2.5z" fill="#fafafa" stroke="#9a9a9a"/><path d="M8.5 2.5H15.5V13.5H6.5V4.5z" fill="#f6f6f6" stroke="#9a9a9a"/></g><g transform="translate(845 30)"><rect x="0.5" y="1.5" width="15" height="12" rx="1.5" fill="#fbbf1c" stroke="#c89040"/><rect x="5" y="0" width="6" height="2.5" rx="1" fill="#f4ec90" stroke="#c8a040" stroke-width="0.8"/><path d="M5.5 4.5H12.5V15.5H3.5V6.5z" fill="#d0f0f0" stroke="#6a9aa0"/></g><g transform="translate(904 30)"><path d="M0.5 8L7 2.5L14.5 7L8 12.5z" fill="#808080"/><path d="M0.5 8L8 12.5V15.5L0.5 11z" fill="#b8b8b8"/><path d="M8 12.5L14.5 7V10L8 15.5z" fill="#dcdcdc"/><path d="M4 5L6 1.5L9 1L10 4z" fill="#6a6a6a"/><path d="M2 8L7 4L12 7" stroke="#a8a8a8" fill="none"/><rect x="9" y="1" width="7" height="7" rx="1.2" fill="#9a9a9a"/><path d="M12.5 1.6L15.4 4.5L12.5 7.4L9.6 4.5z" fill="#fff"/><circle cx="12.5" cy="4.5" r="0.9" fill="#9a9a9a"/><circle cx="10.3" cy="2.3" r="0.6" fill="#fff"/><circle cx="14.7" cy="2.3" r="0.6" fill="#fff"/><circle cx="10.3" cy="6.7" r="0.6" fill="#fff"/><circle cx="14.7" cy="6.7" r="0.6" fill="#fff"/></g><g transform="translate(927 30)"><rect x="0" y="1" width="16" height="14" fill="#7d95c0"/><rect x="1" y="2" width="14" height="12" fill="#ffffff"/><rect x="0" y="0" width="7" height="7" rx="1.2" fill="#f08a10"/><path d="M3.5 0.6000000000000001L6.4 3.5L3.5 6.4L0.6000000000000001 3.5z" fill="#fff"/><circle cx="3.5" cy="3.5" r="0.9" fill="#f08a10"/><circle cx="1.3" cy="1.3" r="0.6" fill="#fff"/><circle cx="5.7" cy="1.3" r="0.6" fill="#fff"/><circle cx="1.3" cy="5.7" r="0.6" fill="#fff"/><circle cx="5.7" cy="5.7" r="0.6" fill="#fff"/><text x="7.6" y="13.2" font-family="Liberation Sans" font-weight="bold" font-size="8.5" letter-spacing="0" fill="#000">P</text></g><g transform="translate(950 30)"><rect x="0" y="1" width="16" height="14" fill="#7d95c0"/><rect x="1" y="2" width="14" height="12" fill="#ffffff"/><rect x="0" y="0" width="7" height="7" rx="1.2" fill="#f08a10"/><path d="M3.5 0.6000000000000001L6.4 3.5L3.5 6.4L0.6000000000000001 3.5z" fill="#fff"/><circle cx="3.5" cy="3.5" r="0.9" fill="#f08a10"/><circle cx="1.3" cy="1.3" r="0.6" fill="#fff"/><circle cx="5.7" cy="1.3" r="0.6" fill="#fff"/><circle cx="1.3" cy="5.7" r="0.6" fill="#fff"/><circle cx="5.7" cy="5.7" r="0.6" fill="#fff"/><text x="2.4" y="13.2" font-family="Liberation Sans" font-weight="bold" font-size="8.5" letter-spacing="-0.2" fill="#000">ПР</text></g><g transform="translate(979 30)"><rect x="0" y="1" width="8" height="3" fill="#8a8a8a"/><rect x="1" y="2" width="6" height="1" fill="#f4f4f4"/><rect x="4" y="4" width="1" height="12" fill="#8a8a8a"/><rect x="4" y="6" width="2" height="1" fill="#8a8a8a"/><rect x="4" y="10" width="2" height="1" fill="#8a8a8a"/><rect x="4" y="14" width="2" height="1" fill="#8a8a8a"/><rect x="6" y="5" width="7" height="3" fill="#8a8a8a"/><rect x="7" y="6" width="5" height="1" fill="#f4f4f4"/><rect x="6" y="9" width="7" height="3" fill="#8a8a8a"/><rect x="7" y="10" width="5" height="1" fill="#f4f4f4"/><rect x="6" y="13" width="7" height="3" fill="#8a8a8a"/><rect x="7" y="14" width="5" height="1" fill="#f4f4f4"/><path d="M8 8L15 1" stroke="#8a8a8a" stroke-width="2"/></g><g transform="translate(1002 30)"><rect x="0" y="1" width="8" height="3" fill="#8a8a8a"/><rect x="1" y="2" width="6" height="1" fill="#f4f4f4"/><rect x="4" y="4" width="1" height="12" fill="#8a8a8a"/><rect x="4" y="6" width="2" height="1" fill="#8a8a8a"/><rect x="4" y="10" width="2" height="1" fill="#8a8a8a"/><rect x="4" y="14" width="2" height="1" fill="#8a8a8a"/><rect x="6" y="5" width="7" height="3" fill="#8a8a8a"/><rect x="7" y="6" width="5" height="1" fill="#f4f4f4"/><rect x="6" y="9" width="7" height="3" fill="#8a8a8a"/><rect x="7" y="10" width="5" height="1" fill="#f4f4f4"/><rect x="6" y="13" width="7" height="3" fill="#8a8a8a"/><rect x="7" y="14" width="5" height="1" fill="#f4f4f4"/><path d="M11 2L15 6M15 2L11 6" stroke="#8a8a8a" stroke-width="1"/></g><g transform="translate(1038 32)"><rect x="6" y="3" width="10" height="1" fill="#50506a"/><rect x="4" y="6" width="12" height="1" fill="#50506a"/><rect x="4" y="9" width="12" height="1" fill="#50506a"/><rect x="4" y="12" width="12" height="1" fill="#50506a"/><rect x="0" y="2" width="4" height="2" fill="#0030d0"/><path d="M3.5 0L7 3L3.5 6z" fill="#0030d0"/></g><g transform="translate(1061 32)"><rect x="6" y="3" width="10" height="1" fill="#50506a"/><rect x="4" y="6" width="12" height="1" fill="#50506a"/><rect x="4" y="9" width="12" height="1" fill="#50506a"/><rect x="4" y="12" width="12" height="1" fill="#50506a"/><rect x="2" y="4" width="2" height="4" fill="#0030d0"/><path d="M0 4L3 0.5L6 4z" fill="#0030d0"/></g><g transform="translate(1084 32)"><rect x="4" y="3" width="12" height="1" fill="#50506a"/><rect x="4" y="6" width="12" height="1" fill="#50506a"/><rect x="4" y="9" width="12" height="1" fill="#50506a"/><rect x="4" y="12" width="12" height="1" fill="#50506a"/><rect x="2" y="7" width="2" height="4" fill="#0030d0"/><path d="M0 10L3 13.5L6 10z" fill="#0030d0"/></g><g transform="translate(1107 32)"><rect x="4" y="3" width="12" height="1" fill="#50506a"/><rect x="4" y="6" width="12" height="1" fill="#50506a"/><rect x="4" y="9" width="12" height="1" fill="#50506a"/><rect x="4" y="12" width="12" height="1" fill="#50506a"/><rect x="0" y="10" width="4" height="2" fill="#0030d0"/><path d="M3.5 8L7 11L3.5 14z" fill="#0030d0"/></g><g transform="translate(1144 31)"><path d="M8.5 0.5Q14 3.5 12.8 9Q11 13.5 6.5 13.2Q4.5 12.8 3.8 10.5" stroke="#8aa4a8" stroke-width="1.3" fill="none"/><path d="M12.8 9Q11 13.5 6.5 13.2Q4.5 12.8 3.8 10.5" stroke="#a8c8cc" stroke-width="1.5" fill="none"/><path d="M0.8 12.8L3.8 9.5" stroke="#d07a14" stroke-width="1.7" stroke-linecap="round"/><path d="M5 4L13 12.3" stroke="#e08a20" stroke-width="1.6" stroke-linecap="round"/><path d="M2 5.8L6.5 1.5" stroke="#3e4e56" stroke-width="2.2"/></g><g transform="translate(1166 34)"><path d="M0 5H10V10H0z" fill="#2a7ad8"/><path d="M1 5.5H9.5V7H1z" fill="#5aa8f0"/><path d="M10 3H13L16 7V10H10z" fill="#f09a20"/><path d="M11 4H13L14.5 6.5H11z" fill="#d8f0ff"/><rect x="0" y="10" width="16" height="1.5" fill="#303030"/><circle cx="3" cy="10.5" r="1.7" fill="#202020"/><circle cx="3" cy="10.5" r="0.7" fill="#f0e060"/><circle cx="13" cy="10.5" r="1.7" fill="#202020"/><circle cx="13" cy="10.5" r="0.7" fill="#f0e060"/></g><g transform="translate(1189 35)"><rect x="5" y="0" width="5" height="2.6" rx="1.2" fill="#e86a10"/><rect x="6" y="0.4" width="3" height="0.9" fill="#ffb070"/><rect x="3" y="2.3" width="5" height="2.6" rx="1.2" fill="#e86a10"/><rect x="4" y="2.6999999999999997" width="3" height="0.9" fill="#ffb070"/><rect x="8" y="2.3" width="5" height="2.6" rx="1.2" fill="#e86a10"/><rect x="9" y="2.6999999999999997" width="3" height="0.9" fill="#ffb070"/><rect x="0" y="4.6" width="5" height="2.6" rx="1.2" fill="#e86a10"/><rect x="1" y="5.0" width="3" height="0.9" fill="#ffb070"/><rect x="5" y="4.6" width="5" height="2.6" rx="1.2" fill="#e86a10"/><rect x="6" y="5.0" width="3" height="0.9" fill="#ffb070"/><rect x="11" y="4.6" width="5" height="2.6" rx="1.2" fill="#e86a10"/><rect x="12" y="5.0" width="3" height="0.9" fill="#ffb070"/></g><g transform="translate(1218 32)"><path d="M0 5H10V10H0z" fill="#2a7ad8"/><path d="M1 5.5H9.5V7H1z" fill="#5aa8f0"/><path d="M10 3H13L16 7V10H10z" fill="#f09a20"/><path d="M11 4H13L14.5 6.5H11z" fill="#d8f0ff"/><rect x="0" y="10" width="16" height="1.5" fill="#303030"/><circle cx="3" cy="10.5" r="1.7" fill="#202020"/><circle cx="3" cy="10.5" r="0.7" fill="#f0e060"/><circle cx="13" cy="10.5" r="1.7" fill="#202020"/><circle cx="13" cy="10.5" r="0.7" fill="#f0e060"/><path d="M1 5Q5 0 9 5z" fill="#e8701a"/><circle cx="4" cy="3" r="1" fill="#ffb060"/><circle cx="7" cy="2.5" r="1" fill="#ffb060"/></g><g transform="translate(1250 29)"><path d="M5 10L12 12.5L19.5 9V11.5L12 15.5L5 13z" fill="#ffffff"/><path d="M12 12.5L19.5 9V11.5L12 15.5z" fill="#d4dce8"/><path d="M4.5 10L11.5 12L19.5 8.5" stroke="#e83030" stroke-width="1.3" fill="none"/><path d="M4.5 10V12.5" stroke="#e83030" stroke-width="1.2"/><path d="M5 13L12 15.5L19.5 12" stroke="#f07070" stroke-width="1" fill="none"/><path d="M6.5 7L12 9L18.5 6V8L12 11L6.5 9z" fill="#ffffff"/><path d="M12 9L18.5 6V8L12 11z" fill="#d0dae8"/><path d="M6 6.5L13 4L19 5.5L12 8.5z" fill="#e35fb0"/><path d="M6 6.5V9" stroke="#e070c0" stroke-width="1.1"/></g><g transform="translate(1273 29)"><path d="M5 10L12 12.5L19.5 9V11.5L12 15.5L5 13z" fill="#ffffff"/><path d="M12 12.5L19.5 9V11.5L12 15.5z" fill="#d4dce8"/><path d="M4.5 10L11.5 12L19.5 8.5" stroke="#1a88e0" stroke-width="1.3" fill="none"/><path d="M4.5 10V12.5" stroke="#1a88e0" stroke-width="1.2"/><path d="M5 13L12 15.5L19.5 12" stroke="#60b8f0" stroke-width="1" fill="none"/><path d="M6.5 7L12 9L18.5 6V8L12 11L6.5 9z" fill="#ffffff"/><path d="M12 9L18.5 6V8L12 11z" fill="#d0dae8"/><path d="M6 6.5L13 4L19 5.5L12 8.5z" fill="#2038d0"/><path d="M6 6.5V9" stroke="#5060e0" stroke-width="1.1"/></g><g transform="translate(3 83)"><path d="M4.5 0.5H7.5V3.5H10.5Q11.5 3.5 11.5 4.5V6.5Q11.5 7.5 10.5 7.5H7.5V10.5Q7.5 11.5 6.5 11.5H5.5Q4.5 11.5 4.5 10.5V7.5H1.5Q0.5 7.5 0.5 6.5V4.5Q0.5 3.5 1.5 3.5H4.5z" fill="#5fa318" stroke="#4b8a10" stroke-width="0.8"/></g><g transform="translate(122 81)"><rect x="1" y="3" width="13" height="5" fill="#4f8a58"/><rect x="2" y="4" width="11" height="3" fill="#9fd4a8"/><rect x="3" y="8" width="9" height="3" fill="#4f8a58"/><rect x="4" y="9" width="7" height="1" fill="#a6d8ae"/><rect x="3" y="11" width="9" height="5" fill="#7a6a40"/><rect x="4" y="12" width="7" height="3" fill="#fff6d0"/><rect x="5" y="12.5" width="3" height="1.5" fill="#1a4a10"/><rect x="9" y="0" width="7" height="7" rx="1.2" fill="#f08a10"/><path d="M12.5 0.6000000000000001L15.4 3.5L12.5 6.4L9.6 3.5z" fill="#fff"/><circle cx="12.5" cy="3.5" r="0.9" fill="#f08a10"/><circle cx="10.3" cy="1.3" r="0.6" fill="#fff"/><circle cx="14.7" cy="1.3" r="0.6" fill="#fff"/><circle cx="10.3" cy="5.7" r="0.6" fill="#fff"/><circle cx="14.7" cy="5.7" r="0.6" fill="#fff"/></g><g transform="translate(323 81)"><path d="M0.5 4.5H2V2.5H7L8 4.5H15.5V15.5H0.5z" fill="#f8c000" stroke="#8a7a60"/><path d="M1 6H15V15H1z" fill="#ffd820"/><path d="M1 10H15V15H1z" fill="#f8b000"/><path d="M11 0V8M7 4H15" stroke="#30a040" stroke-width="1.8"/></g><g transform="translate(459 81)"><rect x="0" y="1" width="16" height="14" fill="#7d95c0"/><rect x="1" y="2" width="14" height="12" fill="#ffffff"/><rect x="0" y="0" width="7" height="7" rx="1.2" fill="#f08a10"/><path d="M3.5 0.6000000000000001L6.4 3.5L3.5 6.4L0.6000000000000001 3.5z" fill="#fff"/><circle cx="3.5" cy="3.5" r="0.9" fill="#f08a10"/><circle cx="1.3" cy="1.3" r="0.6" fill="#fff"/><circle cx="5.7" cy="1.3" r="0.6" fill="#fff"/><circle cx="1.3" cy="5.7" r="0.6" fill="#fff"/><circle cx="5.7" cy="5.7" r="0.6" fill="#fff"/><text x="7.5" y="13" font-family="Liberation Sans" font-weight="bold" font-size="7.5" letter-spacing="0" fill="#000">P</text></g><g transform="translate(583 82)"><path d="M1 1L10 11M10 1L1 11" stroke="#f04820" stroke-width="1.6"/></g><g transform="translate(803 81)"><rect x="0" y="1" width="10" height="10" rx="2" fill="#1e7a3a"/><path d="M4 0H9Q10 0 10 1V2H4z" fill="#8a4ab0"/><text x="1.5" y="8" font-family="Liberation Sans" font-weight="bold" font-size="5.5" fill="#fff">X</text><rect x="5" y="4" width="11" height="11" fill="#9a9a9a"/><rect x="6" y="5" width="9" height="9" fill="#e8e8e8"/><rect x="9" y="6" width="2" height="6" fill="#6ab090"/><rect x="12" y="6" width="2" height="6" fill="#80c0a0"/><path d="M2 10V14H10" stroke="#f07010" stroke-width="2" fill="none"/><path d="M9 11L13 14L9 16z" fill="#f07010"/></g><g transform="translate(922 82)"><rect x="0" y="0" width="14" height="14" fill="#3f8a3f"/><rect x="1" y="1" width="12" height="12" fill="#ffffff"/><rect x="1" y="1" width="12" height="12" fill="#f4fbf4"/><path d="M2.5 3.5L11 10.5M11 3.5L3 10.5" stroke="#22992c" stroke-width="2.6"/><path d="M3.5 3.2L10.5 9.5" stroke="#8fd88f" stroke-width="0.7"/><path d="M3 10.5H8" stroke="#106a18" stroke-width="1"/></g><g transform="translate(1034 81)"><rect x="2" y="0" width="14" height="16" fill="#8a8a8a"/><rect x="3" y="1" width="12" height="14" fill="#ffffff"/><rect x="2" y="3" width="14" height="6" fill="#1a5ae0"/><text x="2.3" y="8.6" font-family="Liberation Sans" font-weight="bold" font-size="7" letter-spacing="-0.6" fill="#fff">XML</text><circle cx="1.8" cy="5.5" r="1.5" fill="#20d080"/><rect x="2" y="9" width="14" height="7" fill="#e8e0e8"/><text x="3" y="15.8" font-family="Liberation Sans" font-weight="bold" font-size="7.5" letter-spacing="-0.5" fill="#101010">ГГЭ</text></g><g transform="translate(1166 81)"><path d="M0.5 4.5H2V2.5H7L8 4.5H15.5V15.5H0.5z" fill="#f8c000" stroke="#8a7a60"/><path d="M1 6H15V15H1z" fill="#ffd820"/><path d="M1 10H15V15H1z" fill="#f8b000"/><path d="M11 0V6" stroke="#1a7ae0" stroke-width="2"/><path d="M7.5 5L11 9L14.5 5z" fill="#1a7ae0"/></g><g transform="translate(1304 81)"><path d="M3.5 0.5H13.5V11.5H1.5V2.5z" fill="#7cd4ff" stroke="#8a8080"/><rect x="1.5" y="12" width="12" height="4" fill="#8a8a8a"/><rect x="2.5" y="13" width="10" height="2" fill="#e0fcff"/><rect x="0.5" y="8.5" width="6" height="3.5" rx="1" fill="#e0fcff" stroke="#404040" stroke-width="1.2"/><rect x="8" y="8.5" width="6" height="3.5" rx="1" fill="#e0fcff" stroke="#404040" stroke-width="1.2"/><path d="M14 8L16 7V9" stroke="#404040" stroke-width="1.1" fill="none"/></g><g transform="translate(35 168)"><rect x="1" y="0" width="11" height="11" fill="#858585"/><rect x="2" y="1" width="9" height="9" fill="#fff8c0"/><path d="M0.5 2.5H6.5L9.5 5.5V11.5H0.5z" fill="#b0ffc0" stroke="#858585"/><path d="M6.5 2.5V5.5H9.5" fill="#a0d8b0" stroke="#858585"/><rect x="2" y="7" width="5" height="1" fill="#80a890"/><rect x="2" y="9" width="5" height="1" fill="#80a890"/></g><g transform="translate(34 216)"><path d="M8.5 0.5Q14 3.5 12.8 9Q11 13.5 6.5 13.2Q4.5 12.8 3.8 10.5" stroke="#8aa4a8" stroke-width="1.3" fill="none"/><path d="M12.8 9Q11 13.5 6.5 13.2Q4.5 12.8 3.8 10.5" stroke="#a8c8cc" stroke-width="1.5" fill="none"/><path d="M0.8 12.8L3.8 9.5" stroke="#d07a14" stroke-width="1.7" stroke-linecap="round"/><path d="M5 4L13 12.3" stroke="#e08a20" stroke-width="1.6" stroke-linecap="round"/><path d="M2 5.8L6.5 1.5" stroke="#3e4e56" stroke-width="2.2"/></g><g transform="translate(34 314)"><path d="M8.5 0.5Q14 3.5 12.8 9Q11 13.5 6.5 13.2Q4.5 12.8 3.8 10.5" stroke="#8aa4a8" stroke-width="1.3" fill="none"/><path d="M12.8 9Q11 13.5 6.5 13.2Q4.5 12.8 3.8 10.5" stroke="#a8c8cc" stroke-width="1.5" fill="none"/><path d="M0.8 12.8L3.8 9.5" stroke="#d07a14" stroke-width="1.7" stroke-linecap="round"/><path d="M5 4L13 12.3" stroke="#e08a20" stroke-width="1.6" stroke-linecap="round"/><path d="M2 5.8L6.5 1.5" stroke="#3e4e56" stroke-width="2.2"/></g><g transform="translate(34 412)"><path d="M8.5 0.5Q14 3.5 12.8 9Q11 13.5 6.5 13.2Q4.5 12.8 3.8 10.5" stroke="#8aa4a8" stroke-width="1.3" fill="none"/><path d="M12.8 9Q11 13.5 6.5 13.2Q4.5 12.8 3.8 10.5" stroke="#a8c8cc" stroke-width="1.5" fill="none"/><path d="M0.8 12.8L3.8 9.5" stroke="#d07a14" stroke-width="1.7" stroke-linecap="round"/><path d="M5 4L13 12.3" stroke="#e08a20" stroke-width="1.6" stroke-linecap="round"/><path d="M2 5.8L6.5 1.5" stroke="#3e4e56" stroke-width="2.2"/></g><g transform="translate(34 265)"><defs><linearGradient id="bd" x1="0" y1="0" x2="0" y2="1"><stop offset="0" stop-color="#7cbcff"/><stop offset="1" stop-color="#f4f8ff"/></linearGradient></defs><path d="M2.5 0.5H11.5V14.5H0.5V2.5z" fill="url(#bd)" stroke="#8a8a8a"/><path d="M0.5 2.5H2.5V0.5" fill="#fff" stroke="#8a8a8a"/></g><g transform="translate(34 363)"><defs><linearGradient id="bd" x1="0" y1="0" x2="0" y2="1"><stop offset="0" stop-color="#7cbcff"/><stop offset="1" stop-color="#f4f8ff"/></linearGradient></defs><path d="M2.5 0.5H11.5V14.5H0.5V2.5z" fill="url(#bd)" stroke="#8a8a8a"/><path d="M0.5 2.5H2.5V0.5" fill="#fff" stroke="#8a8a8a"/></g><g transform="translate(34 461)"><defs><linearGradient id="bd" x1="0" y1="0" x2="0" y2="1"><stop offset="0" stop-color="#7cbcff"/><stop offset="1" stop-color="#f4f8ff"/></linearGradient></defs><path d="M2.5 0.5H11.5V14.5H0.5V2.5z" fill="url(#bd)" stroke="#8a8a8a"/><path d="M0.5 2.5H2.5V0.5" fill="#fff" stroke="#8a8a8a"/></g></svg>
<span style="left:31.30px;top:6.84px;font-size:12px;line-height:12px;font-weight:normal;color:#000;letter-spacing:-0.184px;">Смета</span>
<span style="left:77.50px;top:6.84px;font-size:12px;line-height:12px;font-weight:normal;color:#000;letter-spacing:-0.242px;">Работа</span>
<span style="left:127.50px;top:6.84px;font-size:12px;line-height:12px;font-weight:normal;color:#000;letter-spacing:0.124px;">Информация</span>
<span style="left:213.70px;top:6.84px;font-size:12px;line-height:12px;font-weight:normal;color:#000;letter-spacing:0.240px;">Справочники</span>
<span style="left:300.50px;top:6.84px;font-size:12px;line-height:12px;font-weight:normal;color:#000;letter-spacing:0.195px;">Настройки</span>
<span style="left:373.00px;top:6.84px;font-size:12px;line-height:12px;font-weight:normal;color:#000;letter-spacing:-0.157px;">Отдохнуть</span>
<span style="left:441.70px;top:6.84px;font-size:12px;line-height:12px;font-weight:normal;color:#000;letter-spacing:0.403px;">Окно</span>
<span style="left:482.80px;top:6.84px;font-size:12px;line-height:12px;font-weight:normal;color:#000;letter-spacing:0.628px;">Помощь</span>
<span style="left:543.60px;top:6.84px;font-size:12px;line-height:12px;font-weight:normal;color:#000;letter-spacing:0.125px;">Структурные справочники</span>
<span style="left:384.30px;top:31.84px;font-size:12px;line-height:12px;font-weight:normal;color:#939393;letter-spacing:0.033px;">Изменить тип строки...</span>
<span style="left:704.30px;top:31.84px;font-size:12px;line-height:12px;font-weight:normal;color:#939393;letter-spacing:0.011px;">Копировать в смету</span>
<span style="left:13.30px;top:58.34px;font-size:12px;line-height:12px;font-weight:normal;color:#939393;letter-spacing:0.112px;">Ресурсы</span>
<span style="left:69.30px;top:58.34px;font-size:12px;line-height:12px;font-weight:normal;color:#939393;letter-spacing:0.019px;">Панель цен</span>
<span style="left:142.30px;top:58.34px;font-size:12px;line-height:12px;font-weight:normal;color:#939393;letter-spacing:0.078px;">Лимит. затраты</span>
<span style="left:236.70px;top:58.34px;font-size:12px;line-height:12px;font-weight:normal;color:#939393;letter-spacing:-0.884px;">ЭСН</span>
<span style="left:269.80px;top:58.34px;font-size:12px;line-height:12px;font-weight:normal;color:#939393;letter-spacing:-0.165px;">Состав работ</span>
<span style="left:351.70px;top:58.34px;font-size:12px;line-height:12px;font-weight:normal;color:#939393;letter-spacing:-0.236px;">Тех. часть</span>
<span style="left:414.50px;top:58.34px;font-size:12px;line-height:12px;font-weight:normal;color:#939393;letter-spacing:0.110px;">Индексы</span>
<span style="left:473.00px;top:58.34px;font-size:12px;line-height:12px;font-weight:normal;color:#939393;letter-spacing:0.188px;">Поправки</span>
<span style="left:536.90px;top:58.34px;font-size:12px;line-height:12px;font-weight:normal;color:#939393;letter-spacing:0.330px;">Формулы</span>
<span style="left:599.90px;top:58.34px;font-size:12px;line-height:12px;font-weight:normal;color:#939393;letter-spacing:-0.142px;">Структура</span>
<span style="left:664.90px;top:58.34px;font-size:12px;line-height:12px;font-weight:normal;color:#939393;letter-spacing:-0.056px;">Оглавление</span>
<span style="left:741.70px;top:58.34px;font-size:12px;line-height:12px;font-weight:normal;color:#000;letter-spacing:0.214px;">Список открытых окон</span>
<span style="left:20.30px;top:82.84px;font-size:12px;line-height:12px;font-weight:normal;color:#000;letter-spacing:0.028px;">Добавить строку</span>
<span style="left:141.30px;top:82.84px;font-size:12px;line-height:12px;font-weight:normal;color:#000;letter-spacing:0.094px;">Добавить подчиненную строку</span>
<span style="left:342.40px;top:82.84px;font-size:12px;line-height:12px;font-weight:normal;color:#000;letter-spacing:-0.040px;">Добавить документ</span>
<span style="left:478.30px;top:82.84px;font-size:12px;line-height:12px;font-weight:normal;color:#000;letter-spacing:-0.186px;">Добавить раздел</span>
<span style="left:599.30px;top:82.84px;font-size:12px;line-height:12px;font-weight:normal;color:#000;letter-spacing:-0.271px;">Удалить</span>
<span style="left:661.60px;top:82.84px;font-size:12px;line-height:12px;font-weight:normal;color:#000;letter-spacing:-0.005px;">Изменить тип строки...</span>
<span style="left:822.70px;top:82.84px;font-size:12px;line-height:12px;font-weight:normal;color:#000;letter-spacing:-0.062px;">Импорт из Excel</span>
<span style="left:940.30px;top:82.84px;font-size:12px;line-height:12px;font-weight:normal;color:#000;letter-spacing:-0.206px;">Экспорт в Excel</span>
<span style="left:1053.70px;top:82.84px;font-size:12px;line-height:12px;font-weight:normal;color:#000;letter-spacing:-0.233px;">Экспорт в XML ГГЭ</span>
<span style="left:1185.40px;top:82.84px;font-size:12px;line-height:12px;font-weight:normal;color:#000;letter-spacing:0.010px;">Изменить документ</span>
<span style="left:1323.90px;top:82.84px;font-size:12px;line-height:12px;font-weight:normal;color:#000;letter-spacing:0.044px;">Просмотр документа</span>
<span style="left:1453.80px;top:82.84px;font-size:12px;line-height:12px;font-weight:normal;color:#000;letter-spacing:-0.083px;">Очистить связь со сметой</span>
<span style="left:18.30px;top:122.69px;font-size:11px;line-height:11px;font-weight:normal;color:#000;letter-spacing:0.528px;">Тип</span>
<span style="left:68.90px;top:122.69px;font-size:11px;line-height:11px;font-weight:normal;color:#000;letter-spacing:-0.298px;">№ п.п.</span>
<span style="left:168.90px;top:122.69px;font-size:11px;line-height:11px;font-weight:normal;color:#000;letter-spacing:-0.022px;">Наименование работ</span>
<span style="left:404.80px;top:122.69px;font-size:11px;line-height:11px;font-weight:normal;color:#000;letter-spacing:0.002px;">Ед. изм.</span>
<span style="left:508.80px;top:122.69px;font-size:11px;line-height:11px;font-weight:normal;color:#000;letter-spacing:-0.026px;">Объем работ</span>
<span style="left:599.90px;top:109.19px;font-size:11px;line-height:11px;font-weight:normal;color:#000;letter-spacing:0.131px;">Формула расчета</span>
<span style="left:599.90px;top:122.19px;font-size:11px;line-height:11px;font-weight:normal;color:#000;letter-spacing:0.008px;">объемов работ и</span>
<span style="left:600.30px;top:135.19px;font-size:11px;line-height:11px;font-weight:normal;color:#000;letter-spacing:-0.038px;">расхода материалов</span>
<span style="left:713.60px;top:113.69px;font-size:11px;line-height:11px;font-weight:normal;color:#000;letter-spacing:-0.002px;">Ссылка на чертежи, спецификации в проектной документации</span>
<span style="left:714.00px;top:135.69px;font-size:11px;line-height:11px;font-weight:normal;color:#000;letter-spacing:-0.004px;">Описание</span>
<span style="left:957.00px;top:135.69px;font-size:11px;line-height:11px;font-weight:normal;color:#000;letter-spacing:-0.110px;">Наименование файла</span>
<span style="left:1123.70px;top:135.69px;font-size:11px;line-height:11px;font-weight:normal;color:#000;letter-spacing:0.057px;">Номер страниц</span>
<span style="left:1236.20px;top:122.69px;font-size:11px;line-height:11px;font-weight:normal;color:#000;letter-spacing:-0.012px;">Дополнительная информация</span>
<span style="left:1402.90px;top:122.69px;font-size:11px;line-height:11px;font-weight:normal;color:#000;letter-spacing:0.130px;">Комментарий</span>
<span style="left:1569.60px;top:122.69px;font-size:11px;line-height:11px;font-weight:normal;color:#000;letter-spacing:0.214px;">Связь с ЛС</span>
<span style="left:68.90px;top:153.65px;font-size:14px;line-height:14px;font-weight:bold;color:#0a0aff;letter-spacing:-0.219px;font-family:'Liberation Serif',serif;">ВОР.Р1</span>
<span style="left:168.80px;top:153.00px;font-size:13px;line-height:13px;font-weight:bold;color:#fff;letter-spacing:0.400px;">Раздел: 1. Проект организации</span>
<span style="left:168.80px;top:169.00px;font-size:13px;line-height:13px;font-weight:bold;color:#fff;letter-spacing:0.513px;">земельного участка</span>
<span style="left:69.30px;top:201.69px;font-size:11px;line-height:11px;font-weight:normal;color:#000;letter-spacing:0.000px;">1</span>
<span style="left:168.90px;top:201.69px;font-size:11px;line-height:11px;font-weight:normal;color:#000;letter-spacing:0.135px;">Разработка грунта в отвал экскаваторами</span>
<span style="left:168.90px;top:214.69px;font-size:11px;line-height:11px;font-weight:normal;color:#000;letter-spacing:0.115px;">&quot;драглайн&quot; одноковшовыми электрическими</span>
<span style="left:168.90px;top:227.69px;font-size:11px;line-height:11px;font-weight:normal;color:#000;letter-spacing:0.000px;">шагающими при работе на</span>
<span style="left:404.80px;top:201.69px;font-size:11px;line-height:11px;font-weight:normal;color:#000;letter-spacing:0.000px;">м3</span>
<span style="left:508.60px;top:201.69px;font-size:11px;line-height:11px;font-weight:normal;color:#000;letter-spacing:0.000px;">457</span>
<span style="left:1570.30px;top:201.69px;font-size:11px;line-height:11px;font-weight:normal;color:#000;letter-spacing:-0.158px;">ЛС 07-01, Р-01, п. 2</span>
<span style="left:714.00px;top:250.69px;font-size:11px;line-height:11px;font-weight:normal;color:#000;letter-spacing:-0.047px;">ПД 20023-20-14</span>
<span style="left:956.70px;top:250.69px;font-size:11px;line-height:11px;font-weight:normal;color:#000;letter-spacing:0.035px;">Чертеж ПГ 02-14.pdf</span>
<span style="left:1124.00px;top:250.69px;font-size:11px;line-height:11px;font-weight:normal;color:#000;letter-spacing:0.350px;">45</span>
<span style="left:69.00px;top:299.69px;font-size:11px;line-height:11px;font-weight:normal;color:#000;letter-spacing:0.000px;">2</span>
<span style="left:168.80px;top:299.69px;font-size:11px;line-height:11px;font-weight:normal;color:#000;letter-spacing:0.162px;">Устройство насыпи грунта</span>
<span style="left:404.80px;top:299.69px;font-size:11px;line-height:11px;font-weight:normal;color:#000;letter-spacing:0.000px;">м3</span>
<span style="left:508.60px;top:299.69px;font-size:11px;line-height:11px;font-weight:normal;color:#000;letter-spacing:0.000px;">457</span>
<span style="left:1570.30px;top:299.69px;font-size:11px;line-height:11px;font-weight:normal;color:#000;letter-spacing:-0.158px;">ЛС 07-01, Р-01, п. 3</span>
<span style="left:714.00px;top:348.69px;font-size:11px;line-height:11px;font-weight:normal;color:#000;letter-spacing:-0.047px;">ПД 20023-20-14</span>
<span style="left:956.70px;top:348.69px;font-size:11px;line-height:11px;font-weight:normal;color:#000;letter-spacing:0.000px;">Чертеж ПГ-02-16.pdf</span>
<span style="left:1124.00px;top:348.69px;font-size:11px;line-height:11px;font-weight:normal;color:#000;letter-spacing:0.000px;">1</span>
<span style="left:69.00px;top:397.69px;font-size:11px;line-height:11px;font-weight:normal;color:#000;letter-spacing:0.000px;">3</span>
<span style="left:168.80px;top:397.69px;font-size:11px;line-height:11px;font-weight:normal;color:#000;letter-spacing:0.151px;">Устройство металлического ограждения</span>
<span style="left:404.70px;top:397.69px;font-size:11px;line-height:11px;font-weight:normal;color:#000;letter-spacing:1.200px;">м2</span>
<span style="left:508.50px;top:397.69px;font-size:11px;line-height:11px;font-weight:normal;color:#000;letter-spacing:0.470px;">256</span>
<span style="left:1570.30px;top:397.69px;font-size:11px;line-height:11px;font-weight:normal;color:#000;letter-spacing:-0.158px;">ЛС 07-01, Р-01, п. 1</span>
<span style="left:714.00px;top:446.69px;font-size:11px;line-height:11px;font-weight:normal;color:#000;letter-spacing:-0.047px;">ПД 20023-20-14</span>
<span style="left:956.70px;top:446.69px;font-size:11px;line-height:11px;font-weight:normal;color:#000;letter-spacing:0.000px;">Чертеж ПГ-02-16.pdf</span>
<span style="left:1124.00px;top:446.69px;font-size:11px;line-height:11px;font-weight:normal;color:#000;letter-spacing:0.000px;">2</span>
<span style="left:6.80px;top:1075.19px;font-size:11px;line-height:11px;font-weight:normal;color:#000;letter-spacing:0.000px;">Ведомость объемов работ</span>
<span style="left:154.90px;top:1072.69px;font-size:11px;line-height:11px;font-weight:normal;color:#000;letter-spacing:0.072px;">Предпросмотр</span>
<span style="left:1727.00px;top:1099.84px;font-size:12px;line-height:12px;font-weight:normal;color:#000;letter-spacing:-1.200px;">RU</span>
<div style="left:1753px;top:0px;width:1px;height:1125px;background:#787878;"></div>
<div style="left:0px;top:0px;width:1px;height:1125px;background:#787878;"></div>
<div style="left:0px;top:0px;width:1754px;height:1px;background:#787878;"></div>
<svg style="left:0;top:0" width="1754" height="1125" viewBox="0 0 1754 1125"><rect x="144.5" y="1060.5" width="103" height="32" fill="none" stroke="#ff0000" stroke-width="3"/><path d="M258.7 948.8L204 1044" stroke="#ff0000" stroke-width="3"/><path d="M195.3 1059.1L200.2 1035.1L213.8 1043.3z" fill="#ff0000"/></svg>
</body></html>
